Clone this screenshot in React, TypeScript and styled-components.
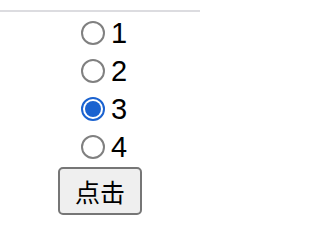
import styled, { createGlobalStyle } from 'styled-components'
import { useState } from 'react'

const GlobalStyle = createGlobalStyle`
  html, body {
    margin: 0;
    padding: 0;
    background: #ffffff;
  }
  body {
    font-family: "Liberation Sans", Arial, sans-serif;
    color: #000000;
  }
`

const Page = styled.div`
  width: 200px;
  height: 248px;
  padding-top: 10px;
  box-sizing: border-box;
`

const Divider = styled.div`
  height: 2px;
  background: #dcdce0;
`

const Form = styled.div`
  display: flex;
  flex-direction: column;
  align-items: center;
  padding-top: 2px;
`

const Option = styled.label`
  display: flex;
  align-items: center;
  height: 38px;
  font-size: 29px;
  line-height: 1;
`

const Radio = styled.input`
  appearance: none;
  box-sizing: border-box;
  width: 24px;
  height: 24px;
  margin: 0 6px 0 8px;
  border-radius: 50%;
  border: 2px solid #808080;
  background: #ffffff;
  position: relative;

  &:checked {
    border-color: #1a62d0;
  }

  &:checked::after {
    content: '';
    position: absolute;
    inset: 2px;
    border-radius: 50%;
    background: #1a62d0;
  }
`

const Button = styled.button`
  box-sizing: border-box;
  width: 84px;
  height: 48px;
  margin-top: 1px;
  padding: 0;
  border: 2px solid #767676;
  border-radius: 5px;
  background: #efefef;
  color: #000000;
  font-family: "Noto Sans CJK SC", "Noto Sans", sans-serif;
  font-size: 25px;
  line-height: 1;
`

const options = ['1', '2', '3', '4']

export default function App() {
  const [value, setValue] = useState('3')

  return (
    <>
      <GlobalStyle />
      <Page>
        <Divider />
        <Form>
          {options.map((o) => (
            <Option key={o}>
              <Radio
                type="radio"
                name="num"
                value={o}
                checked={value === o}
                onChange={() => setValue(o)}
              />
              {o}
            </Option>
          ))}
          <Button>点击</Button>
        </Form>
      </Page>
    </>
  )
}
